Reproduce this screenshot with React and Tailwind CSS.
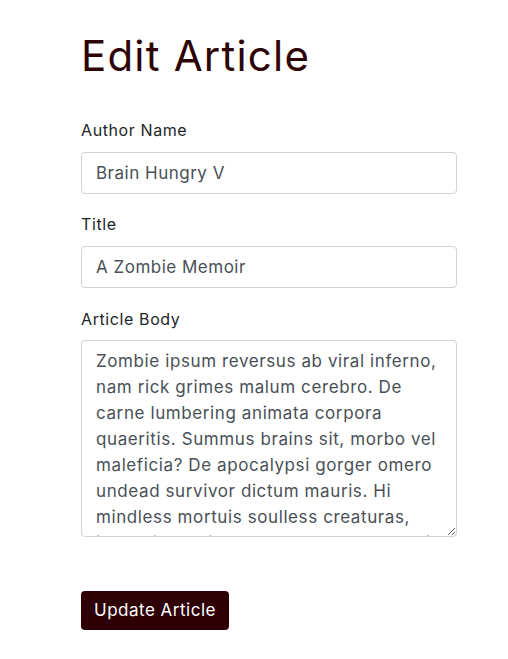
import React from "react";

const body =
  "Zombie ipsum reversus ab viral inferno, nam rick grimes malum cerebro. De carne lumbering animata corpora quaeritis. Summus brains sit, morbo vel maleficia? De apocalypsi gorger omero undead survivor dictum mauris. Hi mindless mortuis soulless creaturas, imo evil stalking monstra adventus resi dentevil vultus comedat cerebella viventium. Qui animated corpse, cricket bat max brucks terribilem incessu zomby.";

export default function App() {
  return (
    <div className="min-h-screen bg-white" style={{ fontFamily: "Inter, 'Noto Sans', sans-serif" }}>
      <div className="w-[376px] ml-[81px] pt-[30px]">
        <h1 className="text-[42px] leading-[52px] text-[#2e0306] font-normal tracking-[1.2px]">Edit Article</h1>
        <form className="mt-[36px] flex flex-col">
          <label className="text-[16px] leading-[24px] text-[#212529] tracking-[0.6px]">Author Name</label>
          <input
            className="mt-[10px] h-[42px] w-full border border-[#ced4da] rounded-[4px] px-[14px] text-[17px] text-[#495057] tracking-[0.5px] outline-none"
            defaultValue="Brain Hungry V"
          />
          <label className="mt-[18px] text-[16px] leading-[24px] text-[#212529] tracking-[0.6px]">Title</label>
          <input
            className="mt-[10px] h-[42px] w-full border border-[#ced4da] rounded-[4px] px-[14px] text-[17px] text-[#495057] tracking-[0.5px] outline-none"
            defaultValue="A Zombie Memoir"
          />
          <label className="mt-[19px] text-[16px] leading-[24px] text-[#212529] tracking-[0.6px]">Article Body</label>
          <textarea
            className="mt-[9px] h-[197px] w-full border border-[#ced4da] rounded-[4px] px-[14px] py-[7px] text-[17px] leading-[26px] text-[#495057] tracking-[0.6px] outline-none resize-y"
            defaultValue={body}
          />
          <div className="mt-[54px]">
            <button
              type="button"
              className="h-[39px] px-[13px] rounded-[4px] bg-[#2e0006] text-white text-[17px] tracking-[0.5px]"
            >
              Update Article
            </button>
          </div>
        </form>
      </div>
    </div>
  );
}
